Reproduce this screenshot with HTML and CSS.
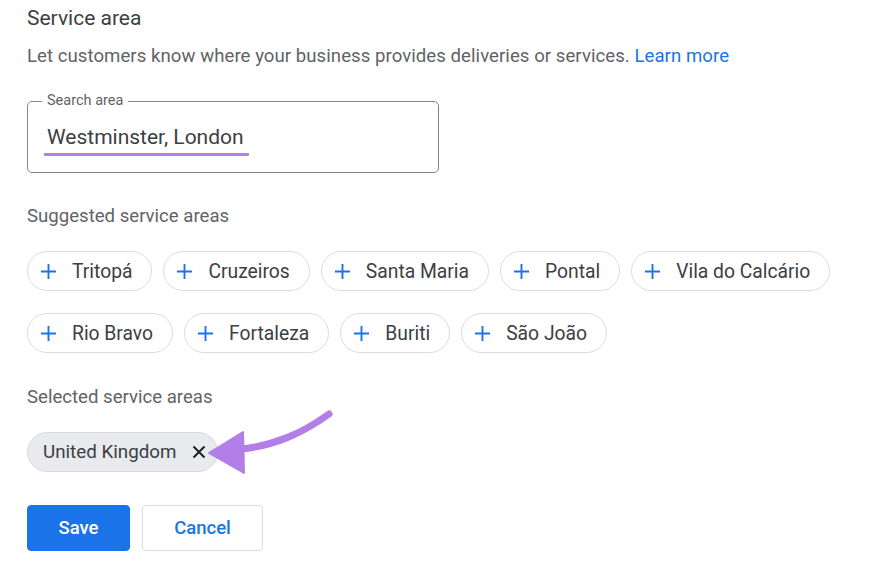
FILE: index.html
```html
<!DOCTYPE html>
<html>
<head>
<meta charset="utf-8">
<link rel="stylesheet" href="styles.css">
</head>
<body>
<div class="page">
  <h1 class="title">Service area</h1>
  <p class="desc">Let customers know where your business provides deliveries or services. <a class="link">Learn more</a></p>

  <div class="field">
    <span class="legend">Search area</span>
    <span class="value-text">Westminster, London</span>
  </div>

  <h2 class="section">Suggested service areas</h2>
  <div class="chips">
    <span class="chip"><svg class="plus" viewBox="0 0 18 18"><path d="M9 1v16M1 9h16"/></svg>Tritopá</span>
    <span class="chip"><svg class="plus" viewBox="0 0 18 18"><path d="M9 1v16M1 9h16"/></svg>Cruzeiros</span>
    <span class="chip"><svg class="plus" viewBox="0 0 18 18"><path d="M9 1v16M1 9h16"/></svg>Santa Maria</span>
    <span class="chip"><svg class="plus" viewBox="0 0 18 18"><path d="M9 1v16M1 9h16"/></svg>Pontal</span>
    <span class="chip"><svg class="plus" viewBox="0 0 18 18"><path d="M9 1v16M1 9h16"/></svg>Vila do Calcário</span>
  </div>
  <div class="chips">
    <span class="chip"><svg class="plus" viewBox="0 0 18 18"><path d="M9 1v16M1 9h16"/></svg>Rio Bravo</span>
    <span class="chip"><svg class="plus" viewBox="0 0 18 18"><path d="M9 1v16M1 9h16"/></svg>Fortaleza</span>
    <span class="chip"><svg class="plus" viewBox="0 0 18 18"><path d="M9 1v16M1 9h16"/></svg>Buriti</span>
    <span class="chip"><svg class="plus" viewBox="0 0 18 18"><path d="M9 1v16M1 9h16"/></svg>São João</span>
  </div>

  <h2 class="section sel">Selected service areas</h2>
  <div class="selected-wrap">
    <span class="chip-selected">United Kingdom<svg class="close" viewBox="0 0 14 14"><path d="M1.5 1.5l11 11M12.5 1.5l-11 11"/></svg></span>
    <svg class="arrow" viewBox="0 0 140 70">
      <path class="arrow-line" d="M150 0 C 125 18, 95 34, 45 37"/>
      <path class="arrow-head" d="M30 39 L 64 18 L 65 59 Z"/>
    </svg>
  </div>

  <div class="actions">
    <button class="btn primary">Save</button>
    <button class="btn secondary">Cancel</button>
  </div>
</div>
</body>
</html>
```

FILE: styles.css
```css
html, body {
  margin: 0;
  padding: 0;
  background: #ffffff;
}
body {
  font-family: Roboto, "Liberation Sans", Arial, sans-serif;
  color: #3c4043;
}
.page {
  padding: 5px 0 0 27px;
}
.title {
  margin: 0;
  font-size: 21px;
  font-weight: 400;
  color: #3c4043;
  line-height: 26px;
}
.desc {
  margin: 13px 0 0;
  font-size: 18.6px;
  line-height: 24px;
  color: #5f6368;
  letter-spacing: 0.05px;
}
.link {
  color: #1a73e8;
  text-decoration: none;
}
.field {
  position: relative;
  margin-top: 33px;
  width: 412px;
  height: 72px;
  box-sizing: border-box;
  border: 1px solid #80868b;
  border-radius: 5px;
  padding: 23px 0 0 18px;
}
.legend {
  position: absolute;
  left: 14px;
  top: -9px;
  padding: 0 5px;
  background: #ffffff;
  font-size: 14.5px;
  line-height: 16px;
  color: #5f6368;
}
.value-text {
  display: inline-block;
  font-size: 21px;
  color: #3c4043;
  line-height: 24px;
  padding: 0 5px 4px 3px;
  margin-left: -2px;
  border-bottom: 3px solid #b27ee8;
  border-radius: 1px;
}
.section {
  margin: 31px 0 0;
  font-size: 18.6px;
  font-weight: 400;
  line-height: 24px;
  color: #5f6368;
}
.chips {
  display: flex;
  gap: 11px;
  margin-top: 23px;
}
.chips + .chips {
  margin-top: 22px;
}
.chip {
  display: inline-flex;
  align-items: center;
  height: 40px;
  box-sizing: border-box;
  border: 1px solid #dadce0;
  border-radius: 20px;
  padding: 0 19px 0 12px;
  font-size: 19.3px;
  color: #3c4043;
}
.plus {
  width: 17px;
  height: 17px;
  margin-right: 15px;
  fill: none;
  stroke: #1a73e8;
  stroke-width: 2;
}
.sel {
  margin-top: 32px;
}
.selected-wrap {
  position: relative;
  margin-top: 23px;
  height: 40px;
}
.chip-selected {
  display: inline-flex;
  align-items: center;
  height: 40px;
  box-sizing: border-box;
  border-radius: 20px;
  background: #e8eaed;
  border: 1px solid #dadce0;
  padding: 0 11px 0 15px;
  font-size: 18.8px;
  color: #3c4043;
}
.close {
  width: 14px;
  height: 14px;
  margin-left: 15px;
  fill: none;
  stroke: #202124;
  stroke-width: 2;
}
.arrow {
  position: absolute;
  left: 152px;
  top: -18px;
  width: 140px;
  height: 70px;
  overflow: visible;
}
.arrow-line {
  fill: none;
  stroke: #b27ee8;
  stroke-width: 7;
  stroke-linecap: round;
}
.arrow-head {
  fill: #b27ee8;
  stroke: #b27ee8;
  stroke-width: 2;
  stroke-linejoin: round;
}
.actions {
  display: flex;
  gap: 12px;
  margin-top: 33px;
}
.btn {
  height: 46px;
  box-sizing: border-box;
  border-radius: 4px;
  font-family: Roboto, "Liberation Sans", Arial, sans-serif;
  font-size: 18.5px;
  font-weight: 500;
  cursor: pointer;
}
.primary {
  width: 103px;
  background: #1a73e8;
  border: 1px solid #1a73e8;
  color: #ffffff;
}
.secondary {
  width: 121px;
  background: #ffffff;
  border: 1px solid #dadce0;
  color: #1a73e8;
}
```
